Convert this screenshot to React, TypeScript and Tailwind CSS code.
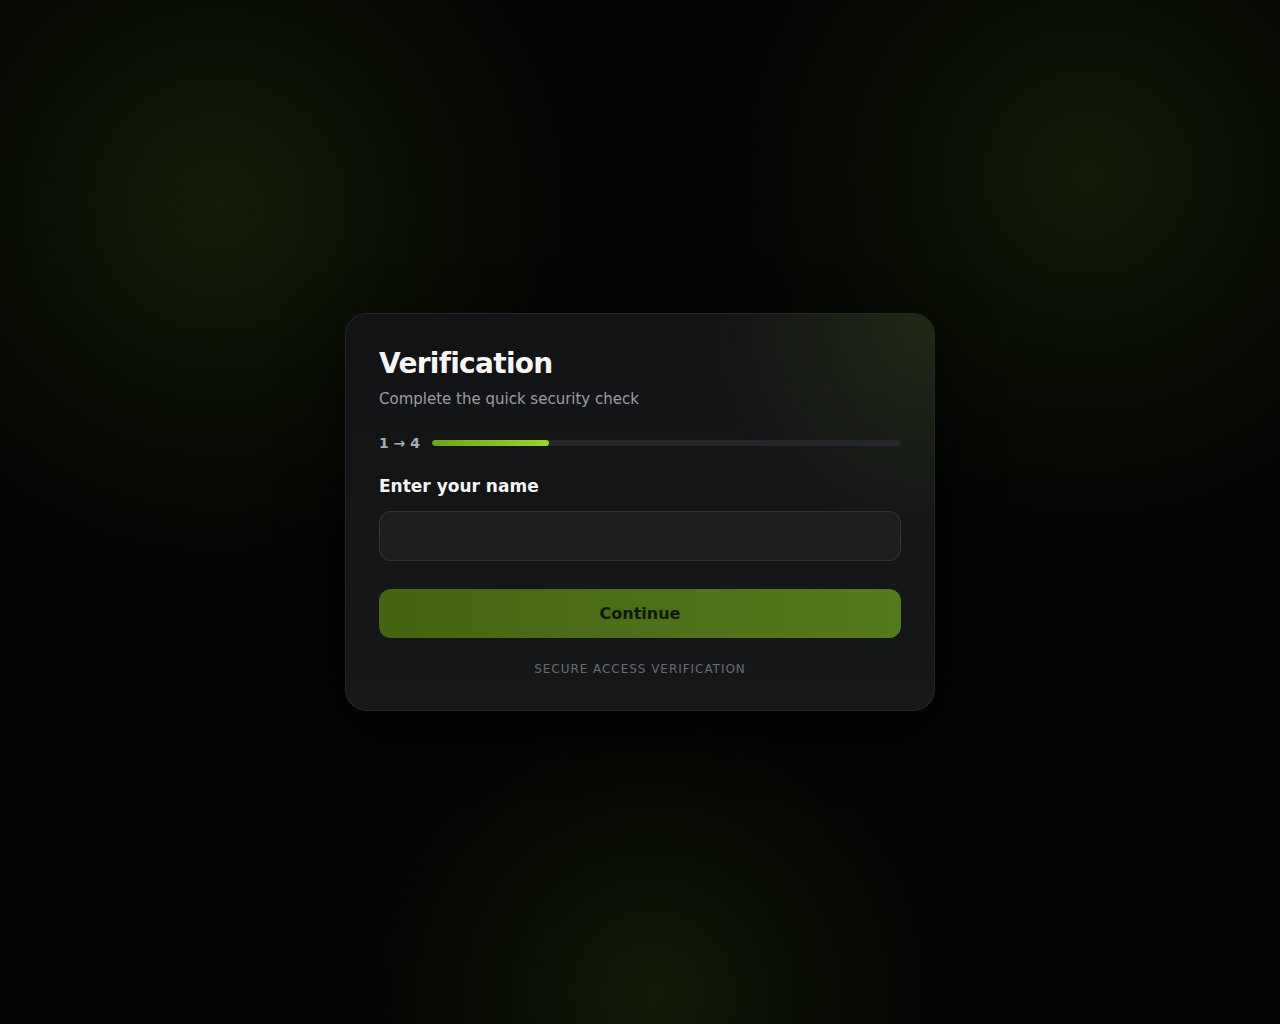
import { useState } from "react";

export default function App() {
  const [name, setName] = useState("");
  const step = 1;
  const total = 4;

  return (
    <div
      className="relative min-h-screen w-full overflow-hidden bg-[#040504] flex items-center justify-center"
      style={{ fontFamily: '"DejaVu Sans", "Liberation Sans", sans-serif' }}
    >
      {/* Ambient green glows */}
      <div className="pointer-events-none absolute inset-0 bg-[radial-gradient(circle_at_17%_20%,rgba(70,110,15,0.22),transparent_27%),radial-gradient(circle_at_85%_17%,rgba(70,110,15,0.2),transparent_26%),radial-gradient(circle_at_51%_97%,rgba(70,110,15,0.2),transparent_24%)]" />

      {/* Card */}
      <div className="relative w-[590px] rounded-[22px] border border-white/[0.07] bg-gradient-to-b from-[#121315] to-[#151719] px-[33px] pt-[33px] pb-[32px] shadow-[0_20px_60px_rgba(0,0,0,0.6)] overflow-hidden">
        <div className="pointer-events-none absolute inset-0 bg-[radial-gradient(circle_at_100%_0%,rgba(90,130,20,0.2),transparent_32%)]" />

        <div className="relative">
          <h1 className="-mt-[1px] text-[28px] font-bold leading-tight tracking-tight text-[#f7f7f7]">Verification</h1>
          <p className="mt-[7px] text-[15px] text-[#9a9ea5]">Complete the quick security check</p>

          {/* Progress */}
          <div className="mt-[22px] flex items-center gap-[12px]">
            <span className="text-[14px] font-bold text-[#a9adb3]">
              {step} → {total}
            </span>
            <div className="h-[6px] flex-1 rounded-full bg-[#25272a] overflow-hidden">
              <div
                className="h-full rounded-full bg-gradient-to-r from-[#6aa614] to-[#9bd81f]"
                style={{ width: `${(step / total) * 100}%` }}
              />
            </div>
          </div>

          {/* Field */}
          <label className="mt-[20px] block text-[17px] font-bold text-[#f4f4f4]">Enter your name</label>
          <input
            value={name}
            onChange={(e) => setName(e.target.value)}
            className="mt-[12px] block h-[50px] w-full rounded-[12px] border border-white/[0.09] bg-[#1c1e20] px-4 text-[15px] text-white outline-none"
          />

          <button className="mt-[28px] h-[49px] w-full rounded-[12px] bg-gradient-to-r from-[#446511] to-[#537a1b] text-[16px] font-bold text-[#0e1806]">
            Continue
          </button>

          <p className="mt-[22px] text-center text-[12px] tracking-[0.08em] text-[#686c72]">
            SECURE ACCESS VERIFICATION
          </p>
        </div>
      </div>
    </div>
  );
}
